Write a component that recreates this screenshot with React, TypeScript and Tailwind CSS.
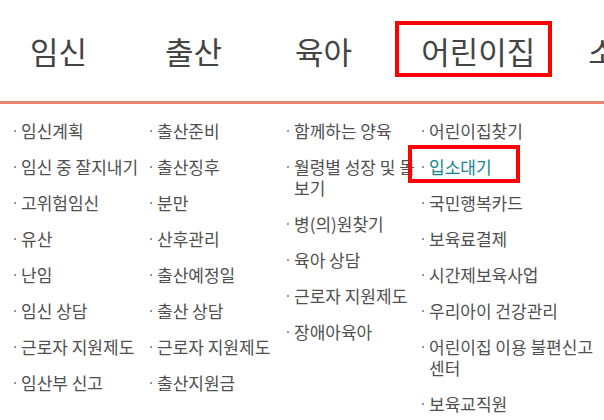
import React from "react";

type Item = { label: string; active?: boolean; boxed?: boolean };

const columns: { width: string; items: Item[] }[] = [
  {
    width: "w-[136px]",
    items: [
      { label: "임신계획" },
      { label: "임신 중 잘지내기" },
      { label: "고위험임신" },
      { label: "유산" },
      { label: "난임" },
      { label: "임신 상담" },
      { label: "근로자 지원제도" },
      { label: "임산부 신고" },
    ],
  },
  {
    width: "w-[137px]",
    items: [
      { label: "출산준비" },
      { label: "출산징후" },
      { label: "분만" },
      { label: "산후관리" },
      { label: "출산예정일" },
      { label: "출산 상담" },
      { label: "근로자 지원제도" },
      { label: "출산지원금" },
    ],
  },
  {
    width: "w-[135px]",
    items: [
      { label: "함께하는 양육" },
      { label: "월령별 성장 및 돌보기" },
      { label: "병(의)원찾기" },
      { label: "육아 상담" },
      { label: "근로자 지원제도" },
      { label: "장애아육아" },
    ],
  },
  {
    width: "w-[180px]",
    items: [
      { label: "어린이집찾기" },
      { label: "입소대기", active: true, boxed: true },
      { label: "국민행복카드" },
      { label: "보육료결제" },
      { label: "시간제보육사업" },
      { label: "우리아이 건강관리" },
      { label: "어린이집 이용 불편신고센터" },
      { label: "보육교직원" },
    ],
  },
];

const MenuItem = ({ label, active, boxed }: Item) => (
  <li className="relative flex">
    <span className="mt-[10px] mr-[5px] ml-[2px] h-[2px] w-[2px] shrink-0 bg-[#9a9a9a]" />
    <span className={active ? "text-[#12868c]" : "text-[#4f4f4f]"}>{label}</span>
    {boxed && (
      <span className="pointer-events-none absolute -top-[11px] left-[-12px] h-[38px] w-[112px] border-4 border-[#ff0000]" />
    )}
  </li>
);

export default function App() {
  return (
    <div
      className="h-[420px] w-[604px] overflow-hidden bg-white"
      style={{ fontFamily: '"Noto Sans CJK KR", "Noto Sans", sans-serif' }}
    >
      <nav className="flex h-[104px] items-center whitespace-nowrap border-b-[3px] border-[#e8846d] pl-[30px] text-[31px] leading-[36px] text-[#444444]">
        <span>임신</span>
        <span className="ml-[78px]">출산</span>
        <span className="ml-[73px]">육아</span>
        <span className="relative ml-[69px]">
          어린이집
          <span className="pointer-events-none absolute -top-[12px] -bottom-[8px] left-[-26px] right-[-17px] border-4 border-[#ff0000]" />
        </span>
        <span className="ml-[53px]">소통</span>
      </nav>
      <div className="flex pt-[16px] pl-[12px] text-[17px] leading-[21px]">
        {columns.map((col, i) => (
          <ul key={i} className={`flex shrink-0 flex-col gap-[15px] ${col.width}`}>
            {col.items.map((item) => (
              <MenuItem key={item.label} {...item} />
            ))}
          </ul>
        ))}
      </div>
    </div>
  );
}
